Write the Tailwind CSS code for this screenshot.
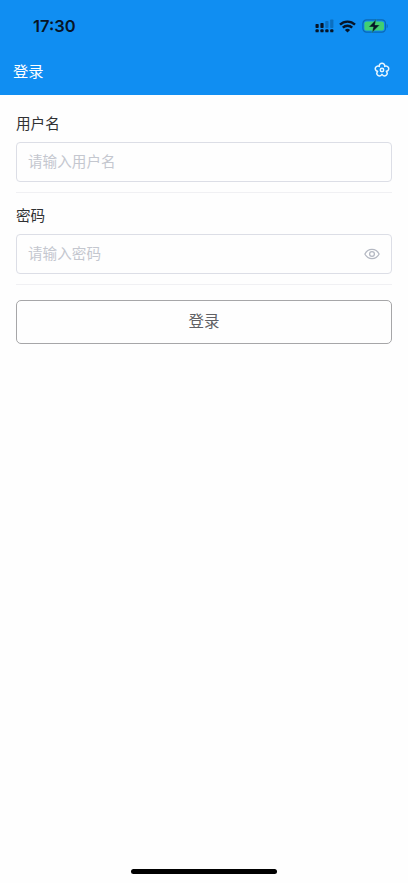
<!DOCTYPE html>
<html lang="zh-CN">
<head>
<meta charset="utf-8">
<meta name="viewport" content="width=device-width, initial-scale=1">
<title>登录</title>
<script src="https://cdn.jsdelivr.net/npm/@tailwindcss/browser@4"></script>
</head>
<body class="flex h-[883px] flex-col overflow-hidden bg-[#fefefe] font-['Inter','Noto_Sans_CJK_SC',sans-serif]">
<header class="h-[95px] shrink-0 bg-[#108ef2] text-white">
  <div class="flex h-[48px] items-center justify-between pt-[4px] pr-[19px] pl-[33px]">
    <span class="text-[16.5px] leading-5 font-semibold text-[#071426]">17:30</span>
    <div class="flex items-center">
      <svg class="mr-[5px] h-[14px] w-[19px]" viewBox="0 0 19 14" fill="#071426">
        <rect x="0.5" y="5" width="3.2" height="4" rx="0.7"/><rect x="5.4" y="4" width="3.2" height="5" rx="0.7"/>
        <g fill="#0b6fc0"><rect x="10.3" y="2" width="3.2" height="7" rx="0.7"/><rect x="15.2" y="0.6" width="3.2" height="8.4" rx="0.7"/></g>
        <rect x="0.5" y="10.3" width="3.2" height="3" rx="0.9"/><rect x="5.4" y="10.3" width="3.2" height="3" rx="0.9"/><rect x="10.3" y="10.3" width="3.2" height="3" rx="0.9"/><rect x="15.2" y="10.3" width="3.2" height="3" rx="0.9"/>
      </svg>
      <svg class="mr-[6px] h-[13px] w-[17px]" viewBox="0 0 17 13" fill="none" stroke="#071426" stroke-width="2.4">
        <path d="M1 4.7a10.8 10.8 0 0 1 15 0M3.8 7.7a6.8 6.8 0 0 1 9.4 0"/>
        <path d="M8.5 12.5 5.9 9.9a3.8 3.8 0 0 1 5.2 0z" fill="#071426" stroke="none"/>
      </svg>
      <svg class="h-[14px] w-[27px]" viewBox="0 0 27 14">
        <rect x="0.9" y="0.9" width="22.6" height="12.2" rx="3.6" fill="none" stroke="#0a68b4" stroke-width="1.2"/>
        <rect x="2.4" y="2.4" width="19.6" height="9.2" rx="2.2" fill="#41cf72"/>
        <path d="M24.7 4.9v4.2c1.4-.5 1.4-3.7 0-4.2z" fill="#0a68b4"/>
        <path d="M14 .6 6.8 7.9h4.5l-1.2 5.5 7.5-7.5h-4.7z" fill="#071426" stroke="#41cf72" stroke-width=".4"/>
      </svg>
    </div>
  </div>
  <div class="flex h-[47px] items-center justify-between pr-[18px] pl-[13px]">
    <h1 class="pt-px text-[15.3px] leading-5">登录</h1>
    <svg class="mb-[3px] h-4 w-4" viewBox="0 0 16 16" fill="none" stroke="#e8f6ff" stroke-width="1.5" stroke-linejoin="round">
      <path d="M5.3 4.4C4.9 .2 11.1 .2 10.7 4.4C14.6 2.9 16.5 8 12.4 9.3C14.8 12.8 10.6 15.9 8 12.4C5.4 15.9 1.2 12.8 3.6 9.3C-.5 8 1.4 2.9 5.3 4.4Z"/>
      <circle cx="8" cy="8" r="1.7"/>
    </svg>
  </div>
</header>
<main class="px-4">
  <form>
    <div class="h-[98px] border-b border-[#f0f0f3] pt-[19px]">
      <div class="text-[14.6px] leading-5 text-[#303133]">用户名</div>
      <div class="mt-2 flex h-[40px] items-center rounded-[4px] border border-[#dcdee6] px-[11px] pt-[2px] text-[14.6px] text-[#c4c7cf]">请输入用户名</div>
    </div>
    <div class="h-[92px] border-b border-[#f0f0f3] pt-[13px]">
      <div class="text-[14.6px] leading-5 text-[#303133]">密码</div>
      <div class="mt-2 flex h-[40px] items-center justify-between rounded-[4px] border border-[#dcdee6] px-[11px] pt-[2px] text-[14.6px] text-[#c4c7cf]">
        <span>请输入密码</span>
        <svg class="mb-[3px] h-4 w-4" viewBox="0 0 16 16" fill="none" stroke="#b4b8c2" stroke-width="1.25">
          <path d="M.9 8C4 1.7 12 1.7 15.1 8C12 14.3 4 14.3 .9 8Z"/><circle cx="8" cy="8" r="2.4"/>
        </svg>
      </div>
    </div>
    <button type="button" class="mt-[15px] flex h-[44px] w-full items-center justify-center rounded-[5px] border border-[#a6a6a8] text-[15.5px] text-[#606064]">登录</button>
  </form>
</main>
<div class="mx-auto mt-auto mb-[9px] h-[5px] w-[146px] rounded-full bg-black"></div>
</body>
</html>
